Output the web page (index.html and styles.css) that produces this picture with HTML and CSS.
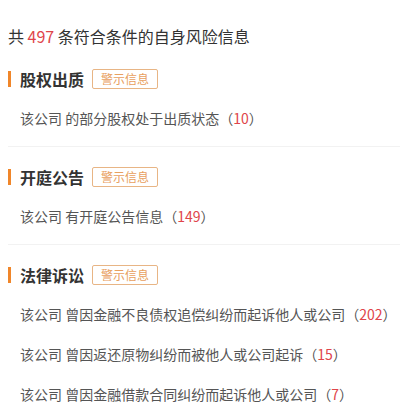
FILE: index.html
```html
<!DOCTYPE html>
<html lang="zh-CN">
<head>
<meta charset="utf-8">
<link rel="stylesheet" href="styles.css">
</head>
<body>
<div class="page">
  <div class="summary">共 <span class="num">497</span> 条符合条件的自身风险信息</div>

  <section class="sec">
    <div class="sec-head">
      <span class="bar"></span>
      <h3 class="sec-title">股权出质</h3>
      <span class="badge">警示信息</span>
    </div>
    <div class="item">该公司 的部分股权处于出质状态（<span class="cnt">10</span>）</div>
  </section>

  <section class="sec">
    <div class="sec-head">
      <span class="bar"></span>
      <h3 class="sec-title">开庭公告</h3>
      <span class="badge">警示信息</span>
    </div>
    <div class="item">该公司 有开庭公告信息（<span class="cnt">149</span>）</div>
  </section>

  <section class="sec last">
    <div class="sec-head">
      <span class="bar"></span>
      <h3 class="sec-title">法律诉讼</h3>
      <span class="badge">警示信息</span>
    </div>
    <div class="item">该公司 曾因金融不良债权追偿纠纷而起诉他人或公司（<span class="cnt">202</span>）</div>
    <div class="item">该公司 曾因返还原物纠纷而被他人或公司起诉（<span class="cnt">15</span>）</div>
    <div class="item">该公司 曾因金融借款合同纠纷而起诉他人或公司（<span class="cnt">7</span>）</div>
  </section>
</div>
</body>
</html>
```

FILE: styles.css
```css
html, body {
  margin: 0;
  padding: 0;
  background: #fff;
}
body {
  font-family: "Microsoft YaHei", "Noto Sans CJK SC", "Noto Sans", sans-serif;
  color: #333;
  overflow: hidden;
}
.page {
  padding: 24px 0 0 8px;
}
.summary {
  font-size: 16px;
  line-height: 24px;
  color: #333;
  white-space: nowrap;
}
.num {
  color: #e0454a;
}
.sec {
  padding-top: 20px;
  padding-bottom: 8px;
  border-bottom: 1px solid #f2f2f2;
}
.sec + .sec {
  padding-top: 19px;
}
.sec.last {
  border-bottom: none;
}
.sec-head {
  display: flex;
  align-items: center;
  height: 22px;
  margin-bottom: 8px;
}
.bar {
  width: 3px;
  height: 16px;
  background: #f0862a;
  margin-right: 9px;
}
.sec-title {
  margin: 0;
  font-size: 16px;
  font-weight: bold;
  color: #333;
  line-height: 22px;
}
.badge {
  margin-left: 8px;
  border: 1px solid #e8b585;
  color: #e8a060;
  font-size: 12px;
  line-height: 18px;
  padding: 0 8px;
  border-radius: 2px;
}
.item {
  font-size: 14px;
  line-height: 40px;
  color: #555;
  padding-left: 12px;
  white-space: nowrap;
}
.cnt {
  color: #e0454a;
}
```
